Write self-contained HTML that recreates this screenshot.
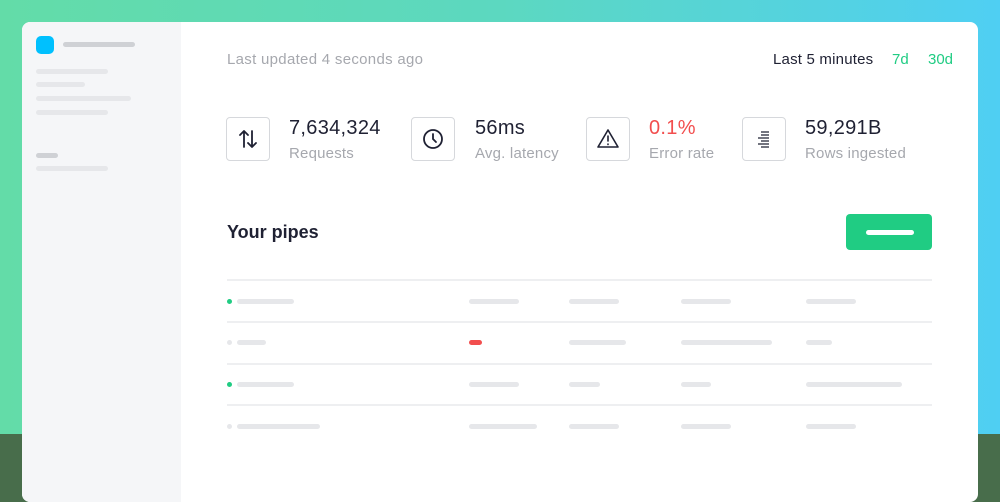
<!DOCTYPE html>
<html><head><style>
*{margin:0;padding:0;box-sizing:border-box}
body{width:1000px;height:488px;overflow:hidden;position:relative;font-family:"Liberation Sans",sans-serif;background:#486d4b}
.bg{position:absolute;left:0;top:0;width:1000px;height:434px;background:linear-gradient(90deg,#63dca8,#5cd8c0 50%,#4fcff3)}
.card{position:absolute;left:22px;top:22px;width:956px;height:480px;background:#fff;border-radius:8px;overflow:hidden}
.side{position:absolute;left:0;top:0;width:159px;height:100%;background:#f5f6f8}
.b{position:absolute;height:5px;border-radius:3px;background:#e6e7ea}
.t{position:absolute;white-space:nowrap}
.box{position:absolute;width:44px;height:44px;border:1px solid #d6d8dc;border-radius:4px;top:95px;display:flex;align-items:center;justify-content:center}
.num{position:absolute;top:95px;font-size:20px;letter-spacing:0.3px;color:#1f2133}
.lab{position:absolute;top:123px;font-size:15px;letter-spacing:0.2px;color:#a6a8ae}
.hl{position:absolute;left:205px;width:705px;height:2px;background:#eeeff1}
.dot{position:absolute;width:5px;height:5px;border-radius:50%;left:205px}
</style></head><body>
<div class="bg"></div>
<div class="card">
 <div class="side">
  <div style="position:absolute;left:14px;top:14px;width:18px;height:18px;border-radius:5px;background:#00c0fe"></div>
  <div class="b" style="left:41px;top:20px;width:72px;background:#cfd1d5"></div>
  <div class="b" style="left:14px;top:47px;width:72px"></div>
  <div class="b" style="left:14px;top:60px;width:49px"></div>
  <div class="b" style="left:14px;top:74px;width:95px"></div>
  <div class="b" style="left:14px;top:88px;width:72px"></div>
  <div class="b" style="left:14px;top:131px;width:22px;background:#cfd1d5"></div>
  <div class="b" style="left:14px;top:144px;width:72px"></div>
 </div>
 <div class="t" style="left:205px;top:29px;font-size:15px;letter-spacing:0.3px;color:#a6a8ae">Last updated 4 seconds ago</div>
 <div class="t" style="left:751px;top:29px;font-size:15px;letter-spacing:0.2px;color:#1f2133">Last 5 minutes</div>
 <div class="t" style="left:870px;top:29px;font-size:15px;color:#20cc83">7d</div>
 <div class="t" style="left:906px;top:29px;font-size:15px;color:#20cc83">30d</div>

 <div class="box" style="left:204px"><svg width="22" height="22" viewBox="0 0 22 22" fill="none" stroke="#1f2133" stroke-width="1.8" stroke-linecap="round" stroke-linejoin="round"><path d="M7 19V3M3 7l4-4 4 4M15 3v16M11 15l4 4 4-4"/></svg></div>
 <div class="num" style="left:267px">7,634,324</div><div class="lab" style="left:267px">Requests</div>
 <div class="box" style="left:389px"><svg width="22" height="22" viewBox="0 0 22 22" fill="none" stroke="#1f2133" stroke-width="1.8" stroke-linecap="round"><circle cx="11" cy="11" r="9"/><path d="M11 6v5l3 3"/></svg></div>
 <div class="num" style="left:453px">56ms</div><div class="lab" style="left:453px">Avg. latency</div>
 <div class="box" style="left:564px"><svg width="24" height="22" viewBox="0 0 24 22" fill="none" stroke="#1f2133" stroke-width="1.6" stroke-linejoin="round" stroke-linecap="round"><path d="M12 2L2 19h20z"/><path d="M12 8v5M12 16v.5"/></svg></div>
 <div class="num" style="left:627px;color:#f24e4e">0.1%</div><div class="lab" style="left:627px">Error rate</div>
 <div class="box" style="left:720px"><svg width="22" height="22" viewBox="0 0 22 22" fill="none" stroke="#1f2133" stroke-width="1.3"><path d="M8 4h8M8 7h8M5 10h11M8 13h8M5 16h11M8 19h8"/></svg></div>
 <div class="num" style="left:783px">59,291B</div><div class="lab" style="left:783px">Rows ingested</div>

 <div class="t" style="left:205px;top:200px;font-size:18px;font-weight:bold;color:#1f2133">Your pipes</div>
 <div style="position:absolute;left:824px;top:192px;width:86px;height:36px;border-radius:4px;background:#20cc83"><div style="position:absolute;left:20px;top:16px;width:48px;height:5px;border-radius:3px;background:#fff"></div></div>

 <div class="hl" style="top:257px"></div>
 <div class="hl" style="top:299px"></div>
 <div class="hl" style="top:341px"></div>
 <div class="hl" style="top:382px"></div>

 <div class="dot" style="top:277px;background:#20cc83"></div>
 <div class="b" style="left:215px;top:277px;width:57px"></div>
 <div class="b" style="left:447px;top:277px;width:50px"></div>
 <div class="b" style="left:547px;top:277px;width:50px"></div>
 <div class="b" style="left:659px;top:277px;width:50px"></div>
 <div class="b" style="left:784px;top:277px;width:50px"></div>

 <div class="dot" style="top:318px;background:#e6e7ea"></div>
 <div class="b" style="left:215px;top:318px;width:29px"></div>
 <div class="b" style="left:447px;top:318px;width:13px;background:#f24e4e"></div>
 <div class="b" style="left:547px;top:318px;width:57px"></div>
 <div class="b" style="left:659px;top:318px;width:91px"></div>
 <div class="b" style="left:784px;top:318px;width:26px"></div>

 <div class="dot" style="top:360px;background:#20cc83"></div>
 <div class="b" style="left:215px;top:360px;width:57px"></div>
 <div class="b" style="left:447px;top:360px;width:50px"></div>
 <div class="b" style="left:547px;top:360px;width:31px"></div>
 <div class="b" style="left:659px;top:360px;width:30px"></div>
 <div class="b" style="left:784px;top:360px;width:96px"></div>

 <div class="dot" style="top:402px;background:#e6e7ea"></div>
 <div class="b" style="left:215px;top:402px;width:83px"></div>
 <div class="b" style="left:447px;top:402px;width:68px"></div>
 <div class="b" style="left:547px;top:402px;width:50px"></div>
 <div class="b" style="left:659px;top:402px;width:50px"></div>
 <div class="b" style="left:784px;top:402px;width:50px"></div>
</div>
</body></html>
